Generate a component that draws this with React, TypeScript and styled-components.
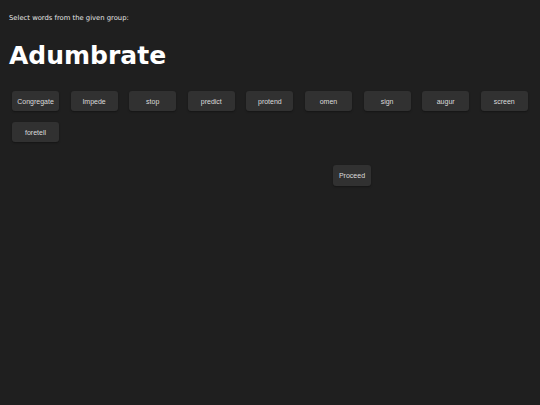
import React from 'react';
import styled, { createGlobalStyle } from 'styled-components';

const GlobalStyle = createGlobalStyle`
    html, body {
        margin:0;
        padding:0;
        background-color:#1f1f1f;
    }
`
const Page = styled.div`
    width:540px;
    height:405px;
    box-sizing:border-box;
    padding:14px 9px 0 9px;
    background-color:#1f1f1f;
    color:#ffffff;
    font-family:"DejaVu Sans", sans-serif;
`
const Prompt = styled.p`
    margin:0;
    font-size:6.8px;
    line-height:9px;
    color:#e6e6e6;
`
const Title = styled.h1`
    margin:18px 0 0 0;
    font-size:25px;
    font-weight:bold;
    line-height:30px;
    color:#ffffff;
`
const WordGrid = styled.div`
    display:flex;
    flex-wrap:wrap;
    column-gap:11.6px;
    row-gap:11px;
    margin-top:20px;
    padding-left:3px;
`
const WordButton = styled.button`
    width:47px;
    height:20px;
    padding:0;
    border:none;
    border-radius:3px;
    background-color:#313131;
    color:#dcdcdc;
    font-family:"Liberation Sans", Arial, sans-serif;
    font-size:7px;
    box-shadow:0 1px 2px rgba(0,0,0,0.35);
    cursor:pointer;
`
const Footer = styled.div`
    display:flex;
    margin-top:23px;
    padding-left:324px;
`
const ProceedButton = styled(WordButton)`
    width:38px;
    height:21px;
`

const words = ['Congregate', 'Impede', 'stop', 'predict', 'protend', 'omen', 'sign', 'augur', 'screen', 'foretell'];

export default function App() {
    return (
        <Page>
            <GlobalStyle />
            <Prompt>Select words from the given group:</Prompt>
            <Title>Adumbrate</Title>
            <WordGrid>
                {words.map(w => (
                    <WordButton key={w}>{w}</WordButton>
                ))}
            </WordGrid>
            <Footer>
                <ProceedButton>Proceed</ProceedButton>
            </Footer>
        </Page>
    )
}
